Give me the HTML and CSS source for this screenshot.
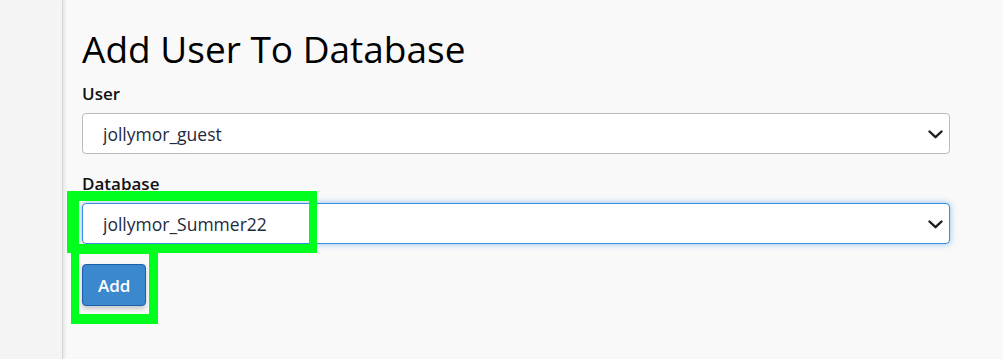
FILE: index.html
```html
<!DOCTYPE html>
<html lang="en">

<head>
    <meta charset="UTF-8">
    <meta name="viewport" content="width=device-width, initial-scale=1.0">
    <title>Add User To Database</title>
    <link rel="stylesheet" href="styles.css">
</head>

<body>
    <div class="layout">
        <aside class="sidebar"></aside>

        <main class="content">
            <h1 class="page-title">Add User To Database</h1>

            <form class="add-user-form">
                <div class="form-group">
                    <label for="user">User</label>
                    <div class="select-wrap">
                        <select id="user" class="form-select">
                            <option>jollymor_guest</option>
                        </select>
                        <svg class="chevron" width="15" height="9" viewBox="0 0 15 9">
                            <path d="M1.5 1.5 L7.5 7.2 L13.5 1.5" />
                        </svg>
                    </div>
                </div>

                <div class="form-group">
                    <label for="database">Database</label>
                    <div class="select-wrap">
                        <select id="database" class="form-select focused">
                            <option>jollymor_Summer22</option>
                        </select>
                        <svg class="chevron" width="15" height="9" viewBox="0 0 15 9">
                            <path d="M1.5 1.5 L7.5 7.2 L13.5 1.5" />
                        </svg>
                    </div>
                </div>

                <button type="button" class="btn-primary">Add</button>
            </form>
        </main>
    </div>

    <!-- green annotation boxes drawn over the form -->
    <div class="highlight highlight-db"></div>
    <div class="highlight highlight-add"></div>
</body>

</html>
```

FILE: styles.css
```css
html,
body {
    margin: 0;
    height: 100%;
}

body {
    background: #f9f9f9;
    font-family: 'Open Sans', 'Noto Sans', Arial, sans-serif;
    color: #111;
    overflow: hidden;
}

.layout {
    display: flex;
    min-height: 100vh;
}

.sidebar {
    flex: 0 0 62px;
    background: #f4f4f4;
    border-right: 1px solid #d4d4d4;
    box-shadow: 2px 0 3px rgba(0, 0, 0, .08);
}

.content {
    flex: 1;
    padding: 28px 53px 0 19px;
}

.page-title {
    margin: 0 0 14px;
    font-size: 37px;
    line-height: 42px;
    font-weight: 400;
    color: #000;
}

.form-group {
    margin-bottom: 20px;
}

.form-group label {
    display: block;
    margin-bottom: 9px;
    font-size: 17px;
    line-height: 20px;
    font-weight: 600;
    color: #111;
}

.select-wrap {
    position: relative;
}

.form-select {
    display: block;
    width: 100%;
    height: 41px;
    box-sizing: border-box;
    padding: 0 40px 0 20px;
    border: 1px solid #bbb;
    border-radius: 4px;
    background: #fff;
    font-family: inherit;
    font-size: 17.5px;
    color: #1f2a3c;
    appearance: none;
    -webkit-appearance: none;
    outline: none;
}

.form-select.focused {
    border-color: #3a8ee0;
    box-shadow: 0 0 6px rgba(58, 142, 224, .55);
}

.chevron {
    position: absolute;
    right: 7px;
    top: 17px;
    pointer-events: none;
}

.chevron path {
    fill: none;
    stroke: #1e1e1e;
    stroke-width: 2.4;
    stroke-linecap: round;
    stroke-linejoin: round;
}

.btn-primary {
    height: 42px;
    padding: 0 15px;
    border: 1px solid #1b5eab;
    border-radius: 4px;
    background: #3b88cf;
    color: #fff;
    font-family: inherit;
    font-size: 17px;
    font-weight: 600;
    box-shadow: 0 3px 5px rgba(0, 0, 0, .2);
}

.highlight {
    position: absolute;
    box-sizing: border-box;
    border-style: solid;
    border-color: #00ff1e;
}

.highlight-db {
    left: 67px;
    top: 191px;
    width: 250px;
    height: 62px;
    border-width: 10px 8px 9px 12px;
}

.highlight-add {
    left: 71px;
    top: 245px;
    width: 87px;
    height: 79px;
    border-width: 9px 9px 10px 8px;
}
```
